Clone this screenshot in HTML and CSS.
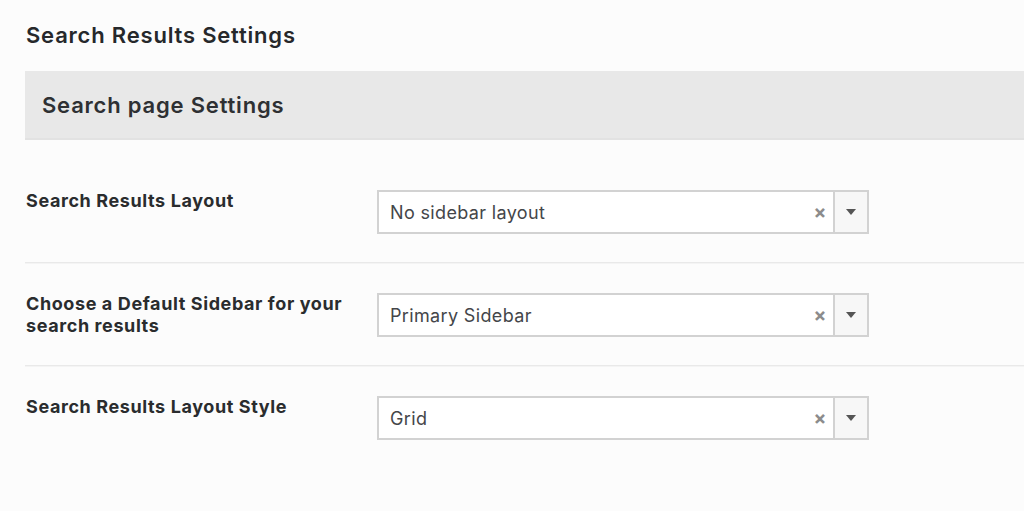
FILE: index.html
```html
<!DOCTYPE html>
<html lang="en">
<head>
<meta charset="utf-8">
<title>Search Results Settings</title>
<link rel="stylesheet" href="styles.css">
</head>
<body>
<main class="settings">
  <h1 class="settings-title">Search Results Settings</h1>
  <h2 class="section-bar">Search page Settings</h2>

  <div class="field-row">
    <div class="field-label">Search Results Layout</div>
    <div class="select">
      <span class="select-value">No sidebar layout</span>
      <span class="select-clear">&times;</span>
      <span class="select-arrow"><i class="caret"></i></span>
    </div>
  </div>

  <div class="field-row">
    <div class="field-label">Choose a Default Sidebar for your search results</div>
    <div class="select">
      <span class="select-value">Primary Sidebar</span>
      <span class="select-clear">&times;</span>
      <span class="select-arrow"><i class="caret"></i></span>
    </div>
  </div>

  <div class="field-row last">
    <div class="field-label">Search Results Layout Style</div>
    <div class="select">
      <span class="select-value">Grid</span>
      <span class="select-clear">&times;</span>
      <span class="select-arrow"><i class="caret"></i></span>
    </div>
  </div>
</main>
</body>
</html>
```

FILE: styles.css
```css
html, body {
  margin: 0;
  padding: 0;
  background: #fcfcfc;
}

body {
  font-family: Inter, "Open Sans", "Liberation Sans", sans-serif;
  color: #2b2d2f;
}

.settings {
  padding: 20px 0 0 25px;
}

.settings-title {
  margin: 0 0 0 1px;
  font-size: 22px;
  font-weight: 600;
  line-height: 30px;
  letter-spacing: 0.8px;
  color: #26282b;
}

.section-bar {
  margin: 21px 0 20px;
  height: 69px;
  padding: 0 17px;
  box-sizing: border-box;
  display: flex;
  align-items: center;
  background: #e8e8e8;
  border-bottom: 2px solid #e2e2e2;
  font-size: 22px;
  font-weight: 600;
  letter-spacing: 0.8px;
  color: #2e3033;
}

.field-row {
  display: flex;
  align-items: flex-start;
  padding: 30px 0 28px;
  border-bottom: 1px solid #e9e9e9;
  box-shadow: 0 1px 0 #f4f4f4;
}

.field-row.last {
  border-bottom: none;
  box-shadow: none;
}

.field-label {
  width: 320px;
  margin: 0 31px 0 1px;
  font-size: 18px;
  font-weight: 700;
  line-height: 22px;
  letter-spacing: 0.6px;
  color: #2a2c2e;
}

.select {
  width: 492px;
  height: 44px;
  box-sizing: border-box;
  display: flex;
  align-items: center;
  background: #fff;
  border: 2px solid #d2d2d2;
}

.select-value {
  flex: 1;
  padding-left: 11px;
  font-size: 18px;
  letter-spacing: 0.35px;
  color: #444649;
}

.select-clear {
  width: 24px;
  text-align: center;
  font-size: 19px;
  font-weight: 700;
  color: #8c8c8c;
  margin-right: 1px;
}

.select-arrow {
  align-self: stretch;
  width: 32px;
  display: flex;
  align-items: center;
  justify-content: center;
  background: #f7f7f7;
  border-left: 2px solid #d2d2d2;
}

.caret {
  width: 0;
  height: 0;
  border-left: 5px solid transparent;
  border-right: 5px solid transparent;
  border-top: 6px solid #555;
}
```
